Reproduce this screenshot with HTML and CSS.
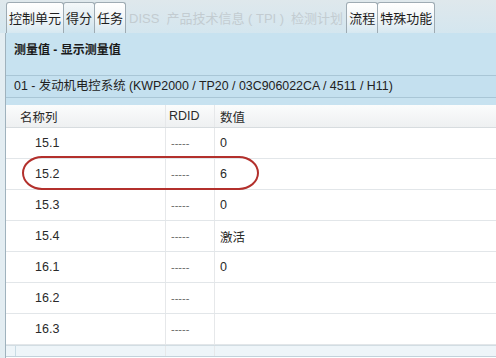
FILE: index.html
```html
<!DOCTYPE html>
<html lang="zh">
<head>
<meta charset="utf-8">
<link rel="stylesheet" href="styles.css">
</head>
<body>
<div class="app">
  <div class="tabs">
    <div class="tab">控制单元</div>
    <div class="tab active">得分</div>
    <div class="tab">任务</div>
    <div class="tab disabled">DISS</div>
    <div class="tab disabled">产品技术信息 ( TPI )</div>
    <div class="tab disabled">检测计划</div>
    <div class="tab">流程</div>
    <div class="tab">特殊功能</div>
  </div>
  <div class="panel">
    <div class="title">测量值 - 显示测量值</div>
    <div class="infobar">01 - 发动机电控系统 (KWP2000 / TP20 / 03C906022CA / 4511 / H11)</div>
    <div class="table">
      <div class="row head">
        <div class="c1">名称列</div><div class="c2">RDID</div><div class="c3">数值</div>
      </div>
      <div class="row"><div class="c1 num">15.1</div><div class="c2 dash">-----</div><div class="c3">0</div></div>
      <div class="row"><div class="c1 num">15.2</div><div class="c2 dash">-----</div><div class="c3">6</div></div>
      <div class="row"><div class="c1 num">15.3</div><div class="c2 dash">-----</div><div class="c3">0</div></div>
      <div class="row"><div class="c1 num">15.4</div><div class="c2 dash">-----</div><div class="c3">激活</div></div>
      <div class="row"><div class="c1 num">16.1</div><div class="c2 dash">-----</div><div class="c3">0</div></div>
      <div class="row"><div class="c1 num">16.2</div><div class="c2 dash">-----</div><div class="c3"></div></div>
      <div class="row"><div class="c1 num">16.3</div><div class="c2 dash">-----</div><div class="c3"></div></div>
      <div class="row partial"><div class="c1"></div><div class="c2"></div><div class="c3"></div></div>
      <div class="highlight"></div>
    </div>
  </div>
</div>
</body>
</html>
```
FILE: styles.css
```css
* { box-sizing: border-box; }
html, body {
  margin: 0;
  padding: 0;
  width: 496px;
  height: 358px;
  overflow: hidden;
  background: #e3edf2;
  font-family: "Liberation Sans", Arial, "Noto Sans CJK SC", sans-serif;
  font-size: 12px;
  color: #2a2a2a;
}
.app {
  display: flex;
  flex-direction: column;
  height: 358px;
}
.tabs {
  display: flex;
  align-items: flex-end;
  height: 33px;
  padding-left: 6px;
  background: linear-gradient(#dfe8ec, #d4e6ef);
}
.tab {
  height: 31px;
  line-height: 31px;
  padding: 0 2px;
  font-size: 13px;
  border: 1px solid #9eabb3;
  border-bottom: none;
  border-radius: 3px 3px 0 0;
  background: linear-gradient(#ffffff, #f2f6f8 50%, #d6e8f1);
  color: #1e1e1e;
  white-space: nowrap;
  margin-right: -1px;
}
.tab.active {
  background: linear-gradient(#f4f8fa, #e2edf2 50%, #cde3ee);
}
.tab.disabled {
  border-color: transparent;
  background: transparent;
  color: #c3ccd1;
  padding: 0 3px;
}
.panel {
  flex: 1;
  display: flex;
  flex-direction: column;
  margin-left: 5px;
  border-left: 1px solid #9fb2bd;
  background: #c7e2f0;
}
.title {
  font-weight: bold;
  height: 42px;
  padding: 7px 0 0 8px;
  color: #1a1a1a;
}
.infobar {
  height: 23px;
  line-height: 21px;
  padding-left: 8px;
  font-size: 12.4px;
  border-top: 1px solid #a9c6d6;
  border-bottom: 1px solid #a9c6d6;
  background: #c4e0ef;
  color: #222;
}
.table {
  position: relative;
  margin-top: 7px;
  background: #ffffff;
  flex: 1;
}
.row {
  display: flex;
  height: 31px;
  border-bottom: 1px solid #e2e6e9;
  align-items: center;
  font-size: 12.5px;
}
.row.head {
  height: 23px;
  background: linear-gradient(#fbfcfc, #eef0f1);
  border-bottom: 1px solid #d7dcdf;
  color: #2b2b2b;
}
.c1 {
  width: 160px;
  height: 100%;
  display: flex;
  align-items: center;
  padding-left: 14px;
  border-right: 1px solid #e6e8ea;
}
.c1.num { padding-left: 29px; }
.c2 {
  width: 49px;
  height: 100%;
  display: flex;
  align-items: center;
  padding-left: 5px;
  border-right: 1px solid #e6e8ea;
}
.row.head .c2 { padding-left: 3px; }
.c3 {
  flex: 1;
  height: 100%;
  display: flex;
  align-items: center;
  padding-left: 5px;
}
.dash {
  color: #6a6a6a;
  font-size: 11px;
}
.row.partial {
  height: 12px;
  background: #eef5f9;
  border-top: 1px solid #d2dde3;
  border-bottom: 1px solid #c2d2db;
}
.row.partial .c1 {
  border-left: 1px solid #c9dbe4;
  margin-left: 9px;
  width: 151px;
}
.highlight {
  position: absolute;
  left: 16px;
  top: 51px;
  width: 237px;
  height: 34px;
  border: 2.5px solid #b3302c;
  border-radius: 20px / 17px;
  pointer-events: none;
}
```
